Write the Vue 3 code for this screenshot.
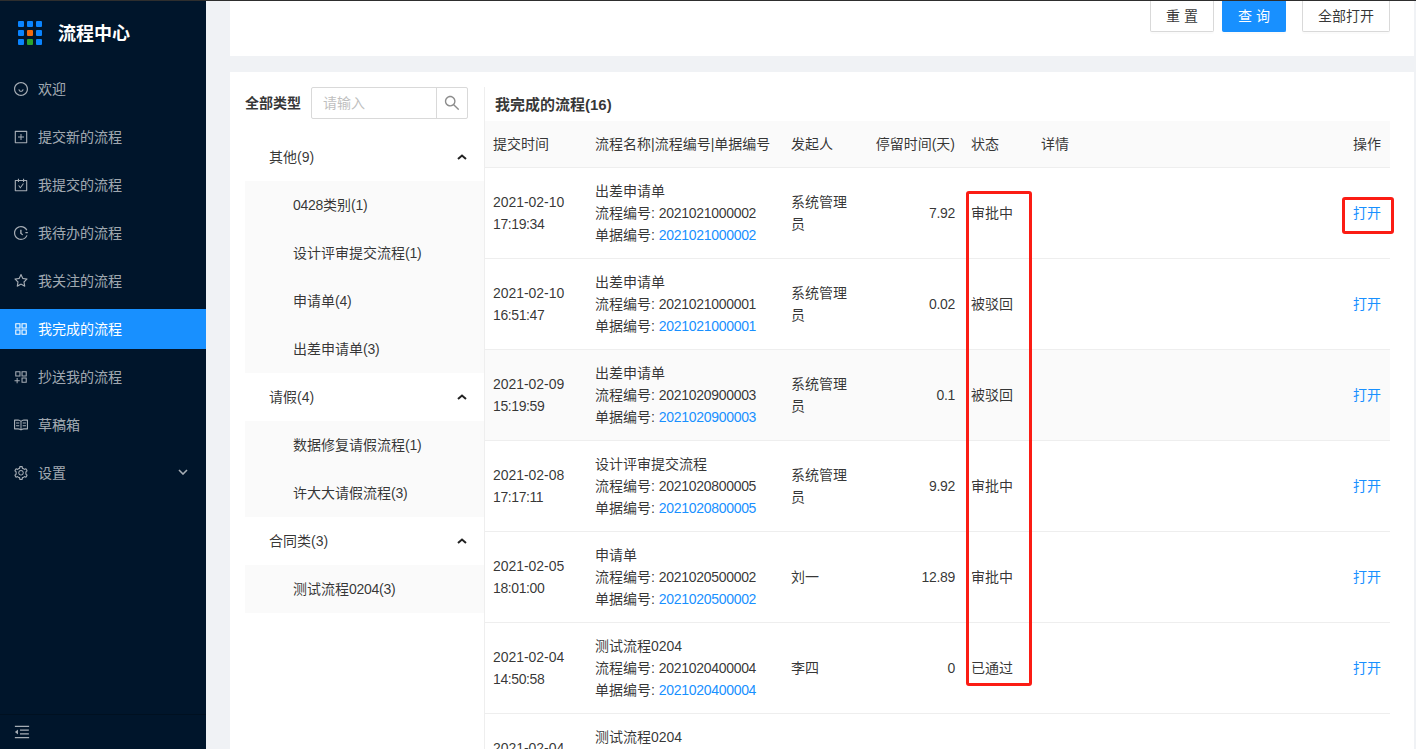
<script setup>
const menu = [
  { label: '欢迎', icon: 'smile' },
  { label: '提交新的流程', icon: 'plus' },
  { label: '我提交的流程', icon: 'carry' },
  { label: '我待办的流程', icon: 'clock' },
  { label: '我关注的流程', icon: 'star' },
  { label: '我完成的流程', icon: 'app', active: true },
  { label: '抄送我的流程', icon: 'appadd' },
  { label: '草稿箱', icon: 'read' },
  { label: '设置', icon: 'setting', arrow: true }
]
const tree = [
  { name: '其他(9)', kids: ['0428类别(1)', '设计评审提交流程(1)', '申请单(4)', '出差申请单(3)'] },
  { name: '请假(4)', kids: ['数据修复请假流程(1)', '许大大请假流程(3)'] },
  { name: '合同类(3)', kids: ['测试流程0204(3)'] }
]
const rows = [
  { d: '2021-02-10', t: '17:19:34', n: '出差申请单', c: '2021021000002', u: '系统管理员', s: '7.92', st: '审批中' },
  { d: '2021-02-10', t: '16:51:47', n: '出差申请单', c: '2021021000001', u: '系统管理员', s: '0.02', st: '被驳回' },
  { d: '2021-02-09', t: '15:19:59', n: '出差申请单', c: '2021020900003', u: '系统管理员', s: '0.1', st: '被驳回', grey: true },
  { d: '2021-02-08', t: '17:17:11', n: '设计评审提交流程', c: '2021020800005', u: '系统管理员', s: '9.92', st: '审批中' },
  { d: '2021-02-05', t: '18:01:00', n: '申请单', c: '2021020500002', u: '刘一', s: '12.89', st: '审批中' },
  { d: '2021-02-04', t: '14:50:58', n: '测试流程0204', c: '2021020400004', u: '李四', s: '0', st: '已通过' },
  { d: '2021-02-04', t: '14:50:58', n: '测试流程0204', c: '2021020400003', u: '李四', s: '0', st: '已通过' }
]
const parts = (s) => s.match(/[\x00-\x7f]+|[^\x00-\x7f]+/g)
const isLatin = (s) => /^[\x00-\x7f]/.test(s)
</script>

<template>
  <div class="page">
    <aside class="side">
      <div class="logo">
        <div class="dots">
          <i v-for="n in 9" :key="n" :class="{ or: n === 5, gr: n === 8 }"></i>
        </div>
        <span class="logotext">流程中心</span>
      </div>
      <nav class="menu">
        <div v-for="m in menu" :key="m.label" class="mi" :class="{ on: m.active }">
          <svg class="ic" viewBox="64 64 896 896" fill="currentColor">
            <template v-if="m.icon === 'smile'">
              <path d="M512 64C264.6 64 64 264.6 64 512s200.6 448 448 448 448-200.6 448-448S759.4 64 512 64zm0 820c-205.4 0-372-166.6-372-372s166.6-372 372-372 372 166.6 372 372-166.6 372-372 372z"/>
              <path d="M664 533h-48.1c-4.2 0-7.8 3.2-8.1 7.4C604 589.9 562.5 629 512 629s-92.1-39.1-95.8-88.6c-.3-4.2-3.9-7.4-8.1-7.4H360a8 8 0 00-8 8.4c4.4 84.3 74.5 151.6 160 151.6s155.6-67.3 160-151.6a8 8 0 00-8-8.4z"/>
            </template>
            <template v-else-if="m.icon === 'plus'">
              <path d="M328 544h152v152c0 4.4 3.6 8 8 8h48c4.4 0 8-3.6 8-8V544h152c4.4 0 8-3.6 8-8v-48c0-4.4-3.6-8-8-8H544V328c0-4.4-3.6-8-8-8h-48c-4.4 0-8 3.6-8 8v152H328c-4.4 0-8 3.6-8 8v48c0 4.4 3.6 8 8 8z"/>
              <path d="M880 112H144c-17.7 0-32 14.3-32 32v736c0 17.7 14.3 32 32 32h736c17.7 0 32-14.3 32-32V144c0-17.7-14.3-32-32-32zm-40 728H184V184h656v656z"/>
            </template>
            <template v-else-if="m.icon === 'carry'">
              <path d="M880 184H712v-64c0-4.4-3.6-8-8-8h-56c-4.4 0-8 3.6-8 8v64H384v-64c0-4.4-3.6-8-8-8h-56c-4.4 0-8 3.6-8 8v64H144c-17.7 0-32 14.3-32 32v664c0 17.7 14.3 32 32 32h736c17.7 0 32-14.3 32-32V216c0-17.7-14.3-32-32-32zm-40 656H184V256h128v48c0 4.4 3.6 8 8 8h56c4.4 0 8-3.6 8-8v-48h256v48c0 4.4 3.6 8 8 8h56c4.4 0 8-3.6 8-8v-48h128v584z"/>
              <path d="M688 420h-55.2c-5.1 0-10 2.5-13 6.6L468.9 634.4l-64.7-89c-3-4.1-7.8-6.6-13-6.6H336c-6.5 0-10.3 7.4-6.5 12.7l126.4 174a16.1 16.1 0 0026 0l212.6-292.7c3.8-5.4 0-12.8-6.5-12.8z"/>
            </template>
            <template v-else-if="m.icon === 'clock'">
              <path d="M512 64C264.6 64 64 264.6 64 512s200.6 448 448 448c190 0 352-118 417-285l-71-27c-54 138-190 236-346 236-205.400 0-372-166.600-372-372s166.600-372 372-372c150 0 280 89 339 217l69-32C850 159 694 64 512 64z"/>
              <path d="M540 300h-72c-4.400 0-8 3.600-8 8v244c0 2.600 1.200 5 3.300 6.500l140 102c3.600 2.600 8.600 1.900 11.200-1.700l28.600-39c2.700-3.700 1.900-8.700-1.800-11.200L548 516V308c0-4.400-3.600-8-8-8z"/>
              <path d="M800 440h140c4.400 0 8 3.600 8 8v64c0 4.400-3.600 8-8 8H800c-4.400 0-8-3.600-8-8v-64c0-4.400 3.600-8 8-8z"/>
            </template>
            <template v-else-if="m.icon === 'star'">
              <path d="M908.1 353.1l-253.9-36.9L540.7 86.1c-3.1-6.3-8.2-11.4-14.5-14.5-15.8-7.8-35-1.3-42.9 14.5L369.8 316.2l-253.9 36.9c-7 1-13.4 4.3-18.3 9.3a32.05 32.05 0 00.6 45.3l183.7 179.1-43.4 252.9a31.95 31.95 0 0046.4 33.7L512 754l227.1 119.4c6.2 3.3 13.4 4.4 20.3 3.2 17.4-3 29.1-19.5 26.1-36.9l-43.4-252.9 183.7-179.1c5-4.9 8.3-11.3 9.3-18.3 2.7-17.5-9.5-33.7-27-36.3zM664.8 561.6l36.1 210.3L512 672.7 323.1 772l36.1-210.3-152.8-149L417.6 382 512 190.7 606.4 382l211.2 30.7-152.8 148.9z"/>
            </template>
            <template v-else-if="m.icon === 'app'">
              <path d="M464 144H160c-8.8 0-16 7.2-16 16v304c0 8.8 7.2 16 16 16h304c8.8 0 16-7.2 16-16V160c0-8.800-7.200-16-16-16zm-52 268H212V212h200v200zm452-268H560c-8.800 0-16 7.200-16 16v304c0 8.800 7.200 16 16 16h304c8.800 0 16-7.200 16-16V160c0-8.800-7.200-16-16-16zm-52 268H612V212h200v200zM464 544H160c-8.800 0-16 7.200-16 16v304c0 8.800 7.200 16 16 16h304c8.800 0 16-7.200 16-16V560c0-8.800-7.200-16-16-16zm-52 268H212V612h200v200zm452-268H560c-8.800 0-16 7.200-16 16v304c0 8.800 7.200 16 16 16h304c8.800 0 16-7.200 16-16V560c0-8.800-7.200-16-16-16zm-52 268H612V612h200v200z"/>
            </template>
            <template v-else-if="m.icon === 'appadd'">
              <path d="M464 144H160c-8.800 0-16 7.200-16 16v304c0 8.800 7.200 16 16 16h304c8.800 0 16-7.200 16-16V160c0-8.800-7.200-16-16-16zm-52 268H212V212h200v200zm452-268H560c-8.800 0-16 7.200-16 16v304c0 8.800 7.200 16 16 16h304c8.800 0 16-7.200 16-16V160c0-8.800-7.200-16-16-16zm-52 268H612V212h200v200zm52 132H560c-8.800 0-16 7.200-16 16v304c0 8.800 7.200 16 16 16h304c8.800 0 16-7.200 16-16V560c0-8.800-7.200-16-16-16zm-52 268H612V612h200v200z"/>
              <path d="M424 712H296V584c0-4.400-3.600-8-8-8h-48c-4.400 0-8 3.600-8 8v128H104c-4.400 0-8 3.600-8 8v48c0 4.400 3.600 8 8 8h128v128c0 4.400 3.600 8 8 8h48c4.400 0 8-3.600 8-8V776h128c4.400 0 8-3.600 8-8v-48c0-4.400-3.600-8-8-8z"/>
            </template>
            <template v-else-if="m.icon === 'read'">
              <path d="M928 161H699.200c-49.100 0-97.100 14.100-138.400 40.700L512 233l-48.800-31.300A255.200 255.200 0 00324.800 161H96c-17.700 0-32 14.300-32 32v568c0 17.700 14.300 32 32 32h228.800c49.100 0 97.100 14.100 138.400 40.700l44.400 28.600c1.300.8 2.800 1.300 4.300 1.300s3-.4 4.300-1.300l44.400-28.600C602 807.100 650.100 793 699.200 793H928c17.700 0 32-14.300 32-32V193c0-17.700-14.300-32-32-32zM324.800 721H136V233h188.800c35.400 0 69.800 10.100 99.500 29.200l48.800 31.300 6.900 4.500v462c-47.600-25.600-100.800-39-155.200-39zm563.200 0H699.200c-54.400 0-107.600 13.400-155.200 39V298l6.900-4.500 48.800-31.300c29.700-19.100 64.100-29.200 99.500-29.200H888v488z"/>
              <path d="M396 345H204c-4.400 0-8 3.600-8 8v48c0 4.400 3.600 8 8 8h192c4.400 0 8-3.600 8-8v-48c0-4.400-3.600-8-8-8zm0 180H204c-4.400 0-8 3.600-8 8v48c0 4.400 3.600 8 8 8h192c4.400 0 8-3.600 8-8v-48c0-4.400-3.600-8-8-8zm224-172v48c0 4.400 3.600 8 8 8h192c4.400 0 8-3.600 8-8v-48c0-4.400-3.600-8-8-8H628c-4.400 0-8 3.600-8 8zm200 172H628c-4.400 0-8 3.600-8 8v48c0 4.400 3.600 8 8 8h192c4.400 0 8-3.600 8-8v-48c0-4.400-3.600-8-8-8z"/>
            </template>
            <template v-else>
              <path d="M924.800 625.700l-65.500-56c3.100-19 4.700-38.400 4.700-57.800s-1.600-38.800-4.700-57.800l65.500-56a32.030 32.030 0 009.300-35.200l-.9-2.600a443.740 443.740 0 00-79.700-137.900l-1.800-2.100a32.120 32.120 0 00-35.100-9.500l-81.300 28.900c-30-24.600-63.500-44-99.700-57.600l-15.700-85a32.050 32.050 0 00-25.800-25.700l-2.700-.5c-52.100-9.400-106.900-9.400-159 0l-2.700.5a32.050 32.050 0 00-25.800 25.700l-15.800 85.400a351.860 351.860 0 00-99 57.400l-81.900-29.100a32 32 0 00-35.100 9.500l-1.800 2.100a446.020 446.020 0 00-79.700 137.900l-.9 2.600c-4.500 12.500-.8 26.500 9.300 35.200l66.300 56.600c-3.100 18.800-4.600 38-4.600 57.100 0 19.200 1.500 38.400 4.600 57.100L99 625.500a32.030 32.030 0 00-9.300 35.200l.9 2.600c18.100 50.400 44.900 96.900 79.700 137.900l1.800 2.100a32.120 32.120 0 0035.100 9.500l81.900-29.100c29.800 24.500 63.100 43.900 99 57.400l15.800 85.400a32.050 32.050 0 0025.800 25.700l2.700.5a449.400 449.400 0 00159 0l2.700-.5a32.050 32.050 0 0025.800-25.700l15.700-85a350 350 0 0099.700-57.600l81.300 28.900a32 32 0 0035.100-9.500l1.800-2.100c34.800-41.100 61.600-87.500 79.700-137.900l.9-2.600c4.500-12.300.8-26.300-9.300-35zM788.300 465.900c2.500 15.100 3.800 30.600 3.800 46.100s-1.300 31-3.800 46.100l-6.600 40.100 74.700 63.900a370.030 370.030 0 01-42.600 73.600L721 702.800l-31.400 25.800c-23.900 19.600-50.500 35-79.300 45.800l-38.100 14.300-17.900 97a377.500 377.500 0 01-85 0l-17.900-97.200-37.800-14.500c-28.500-10.800-55-26.200-78.700-45.700l-31.400-25.900-93.400 33.200c-17-22.900-31.200-47.600-42.600-73.600l75.500-64.500-6.500-40c-2.400-14.900-3.700-30.300-3.700-45.500 0-15.300 1.200-30.600 3.700-45.500l6.500-40-75.500-64.500c11.300-26.100 25.600-50.700 42.600-73.600l93.400 33.200 31.400-25.900c23.700-19.500 50.200-34.900 78.700-45.700l37.900-14.300 17.900-97.200c28.100-3.200 56.800-3.200 85 0l17.900 97 38.100 14.300c28.700 10.800 55.400 26.200 79.300 45.800l31.400 25.800 92.800-32.900c17 22.900 31.200 47.600 42.600 73.600L781.800 426l6.500 39.900zM512 326c-97.200 0-176 78.800-176 176s78.800 176 176 176 176-78.800 176-176-78.800-176-176-176zm79.200 255.200A111.600 111.600 0 01512 614c-29.900 0-58-11.700-79.200-32.800A111.600 111.600 0 01400 502c0-29.900 11.700-58 32.800-79.200C454 401.600 482.100 390 512 390c29.900 0 58 11.600 79.200 32.800A111.600 111.600 0 01624 502c0 29.900-11.700 58-32.800 79.200z"/>
            </template>
          </svg>
          <span>{{ m.label }}</span>
          <svg v-if="m.arrow" class="down" viewBox="0 0 10 6" fill="none" stroke="currentColor" stroke-width="1.600">
            <path d="M1 1l4 4 4-4"/>
          </svg>
        </div>
      </nav>
      <div class="fold">
        <svg viewBox="64 64 896 896" fill="currentColor" class="foldic">
          <path d="M408 442h480c4.400 0 8-3.600 8-8v-56c0-4.400-3.600-8-8-8H408c-4.400 0-8 3.600-8 8v56c0 4.400 3.600 8 8 8zm-8 204c0 4.400 3.600 8 8 8h480c4.400 0 8-3.600 8-8v-56c0-4.400-3.600-8-8-8H408c-4.400 0-8 3.600-8 8v56zm504-486H120c-4.400 0-8 3.600-8 8v56c0 4.400 3.600 8 8 8h784c4.400 0 8-3.600 8-8v-56c0-4.400-3.600-8-8-8zm0 632H120c-4.400 0-8 3.600-8 8v56c0 4.400 3.600 8 8 8h784c4.400 0 8-3.600 8-8v-56c0-4.400-3.600-8-8-8zM115.400 518.900L271.700 642c5.800 4.600 14.400.5 14.400-6.900V388.900c0-7.400-8.500-11.500-14.400-6.900L115.400 505.100a8.740 8.740 0 000 13.800z"/>
        </svg>
      </div>
    </aside>

    <main class="main">
      <section class="filter">
        <button class="btn">重 置</button>
        <button class="btn primary">查 询</button>
        <button class="btn wide">全部打开</button>
      </section>

      <section class="card">
        <div class="types">
          <div class="types-head">
            <b>全部类型</b>
            <div class="search">
              <span class="ph">请输入</span>
              <span class="sbtn">
                <svg viewBox="64 64 896 896" fill="currentColor" class="sic">
                  <path d="M909.600 854.500L649.900 594.800C690.200 542.700 712 479 712 412c0-80.200-31.300-155.400-87.900-212.100-56.600-56.700-132-87.900-212.100-87.900s-155.500 31.300-212.100 87.900C143.200 256.500 112 331.800 112 412c0 80.100 31.300 155.500 87.900 212.100C256.500 680.800 331.800 712 412 712c67 0 130.600-21.800 182.700-62l259.700 259.600a8.200 8.200 0 0011.600 0l43.600-43.500a8.200 8.200 0 000-11.600zM570.400 570.400C528 612.700 471.800 636 412 636s-116-23.300-158.400-65.600C211.300 528 188 471.800 188 412s23.300-116.100 65.600-158.400C296 211.300 352.200 188 412 188s116.100 23.200 158.400 65.600S636 352.200 636 412s-23.300 116.100-65.600 158.400z"/>
                </svg>
              </span>
            </div>
          </div>
          <div v-for="g in tree" :key="g.name" class="group">
            <div class="gname">
              <span>{{ g.name }}</span>
              <svg class="up" viewBox="0 0 10 6" fill="none" stroke="currentColor" stroke-width="2">
                <path d="M1 5l4-3.500L9 5"/>
              </svg>
            </div>
            <div class="kids">
              <div v-for="k in g.kids" :key="k" class="kid"><span v-for="(p, i) in parts(k)" :key="i" :class="{ tight: isLatin(p) }">{{ p }}</span></div>
            </div>
          </div>
        </div>

        <div class="list">
          <div class="title">我完成的流程(16)</div>
          <table class="tb">
            <colgroup>
              <col style="width:102px" />
              <col style="width:196px" />
              <col style="width:80px" />
              <col style="width:100px" />
              <col style="width:70px" />
              <col />
              <col style="width:60px" />
            </colgroup>
            <thead>
              <tr>
                <th>提交时间</th>
                <th>流程名称|流程编号|单据编号</th>
                <th>发起人</th>
                <th class="r">停留时间(天)</th>
                <th>状态</th>
                <th>详情</th>
                <th class="r end">操作</th>
              </tr>
            </thead>
            <tbody>
              <tr v-for="r in rows" :key="r.c" :class="{ grey: r.grey }">
                <td><span class="date">{{ r.d }}</span><br /><span class="time">{{ r.t }}</span></td>
                <td>{{ r.n }}<br />流程编号: <span class="num">{{ r.c }}</span><br />单据编号: <a class="num link">{{ r.c }}</a></td>
                <td>{{ r.u }}</td>
                <td class="r num">{{ r.s }}</td>
                <td>{{ r.st }}</td>
                <td></td>
                <td class="r end"><a class="link">打开</a></td>
              </tr>
            </tbody>
          </table>
        </div>
      </section>
    </main>

    <div class="mark m1"></div>
    <div class="mark m2"></div>
  </div>
</template>

<style>
html, body {
  margin: 0;
  height: 100%;
  overflow: hidden;
}
</style>

<style scoped>
.page {
  position: relative;
  display: flex;
  width: 1416px;
  height: 749px;
  box-sizing: border-box;
  border-top: 1px solid #2e2e2e;
  overflow: hidden;
  font: 14px/22px "Liberation Sans", "Noto Sans CJK SC", sans-serif;
  color: rgba(0, 0, 0, 0.8);
  background: #f0f2f5;
}
.side {
  width: 206px;
  flex: none;
  display: flex;
  flex-direction: column;
  background: #00152b;
  color: rgba(255, 255, 255, 0.65);
}
.logo {
  height: 68px;
  flex: none;
  display: flex;
  align-items: center;
  padding-left: 18px;
  padding-bottom: 4px;
  box-sizing: border-box;
  gap: 16px;
  color: #fff;
  font-size: 18px;
  font-weight: 700;
}
.logotext {
  padding-top: 2px;
}
.dots {
  display: grid;
  grid-template-columns: repeat(3, 6px);
  grid-auto-rows: 6px;
  gap: 3px;
}
.dots i {
  background: #0a84ff;
  border-radius: 1px;
}
.dots i.or { background: #f26a0f; }
.dots i.gr { background: #2ba52e; }
.menu {
  flex: 1;
  display: flex;
  flex-direction: column;
  gap: 8px;
}
.mi {
  height: 40px;
  display: flex;
  align-items: center;
  padding-left: 14px;
  gap: 10px;
}
.mi.on {
  background: #1890ff;
  color: #fff;
}
.ic {
  width: 14px;
  height: 14px;
  flex: none;
}
.down {
  width: 10px;
  height: 6px;
  margin-left: auto;
  margin-right: 18px;
  margin-bottom: 2px;
}
.fold {
  height: 35px;
  flex: none;
  box-sizing: border-box;
  border-top: 1px solid #001020;
  display: flex;
  align-items: center;
  padding-left: 14px;
}
.foldic {
  width: 16px;
  height: 16px;
}
.main {
  flex: 1;
  display: flex;
  flex-direction: column;
  gap: 16px;
  padding: 0 2px 0 24px;
  min-width: 0;
}
.filter {
  height: 55px;
  flex: none;
  background: #fff;
  display: flex;
  justify-content: flex-end;
  align-items: flex-start;
  padding-right: 24px;
}
.btn {
  height: 31px;
  width: 64px;
  padding: 0;
  box-sizing: border-box;
  border: 1px solid #d9d9d9;
  border-top: 0;
  border-radius: 0 0 2px 2px;
  background: #fff;
  color: rgba(0, 0, 0, 0.8);
  font: inherit;
  box-shadow: 0 2px 0 rgba(0, 0, 0, 0.015);
  margin-left: 8px;
}
.btn.primary {
  background: #1890ff;
  border-color: #1890ff;
  color: #fff;
}
.btn.wide {
  width: 88px;
  margin-left: 16px;
}
.card {
  flex: 1;
  background: #fff;
  display: flex;
  padding: 15px 24px 0 15px;
  min-height: 0;
}
.types {
  width: 240px;
  flex: none;
  box-sizing: border-box;
  border-right: 1px solid #eee;
}
.types-head {
  display: flex;
  align-items: center;
  gap: 10px;
  height: 32px;
  margin-bottom: 14px;
  padding-right: 16px;
}
.types-head b {
  font-weight: 700;
  white-space: nowrap;
}
.search {
  flex: 1;
  height: 32px;
  box-sizing: border-box;
  border: 1px solid #d9d9d9;
  border-radius: 2px;
  display: flex;
  align-items: center;
}
.ph {
  flex: 1;
  padding-left: 11px;
  color: #bfbfbf;
}
.sbtn {
  width: 31px;
  height: 30px;
  box-sizing: border-box;
  border-left: 1px solid #d9d9d9;
  display: flex;
  align-items: center;
  justify-content: center;
  color: #8c8c8c;
}
.sic {
  width: 16px;
  height: 16px;
}
.gname {
  height: 48px;
  display: flex;
  align-items: center;
  justify-content: space-between;
  padding: 0 17px 0 24px;
}
.up {
  width: 10px;
  height: 6px;
  color: #222;
}
.kids {
  background: #fafafa;
}
.kid {
  height: 48px;
  line-height: 48px;
  padding-left: 48px;
}
.tight {
  letter-spacing: -0.28px;
}
.list {
  flex: 1;
  min-width: 0;
}
.title {
  height: 34px;
  line-height: 36px;
  padding-left: 10px;
  font-size: 15px;
  font-weight: 700;
}
.tb {
  width: 100%;
  table-layout: fixed;
  border-collapse: collapse;
}
.tb th {
  height: 46px;
  box-sizing: border-box;
  padding: 0 8px;
  text-align: left;
  font-weight: 400;
  background: #fafafa;
  border-bottom: 1px solid #eee;
  white-space: nowrap;
}
.tb td {
  height: 91px;
  box-sizing: border-box;
  padding: 0 8px;
  vertical-align: middle;
  border-bottom: 1px solid #eee;
}
.tb .r {
  text-align: right;
}
.tb .end {
  padding-right: 9px;
}
.tb tr.grey td {
  background: #fafafa;
}
.date {
  letter-spacing: -0.05px;
}
.time {
  letter-spacing: -0.4px;
}
.num {
  letter-spacing: -0.3px;
}
.link {
  color: #1890ff;
}
.mark {
  position: absolute;
  box-sizing: border-box;
  border: 3px solid #fb1c14;
  border-radius: 3px;
}
.m1 {
  left: 966px;
  top: 190px;
  width: 66px;
  height: 495px;
}
.m2 {
  left: 1342px;
  top: 196px;
  width: 52px;
  height: 37px;
}
</style>
